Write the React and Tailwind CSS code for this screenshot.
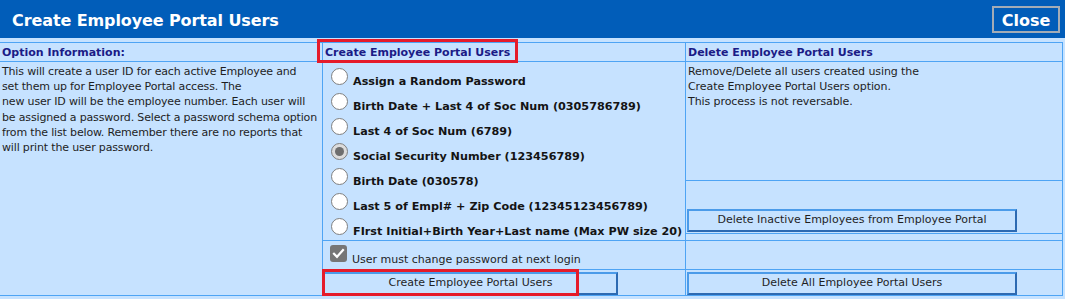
import React from "react";

function Radio({ checked }) {
  return (
    <span
      className={
        checked
          ? "mt-[2px] ml-[8px] w-[17px] h-[17px] rounded-full border border-[#7f7f7f] bg-[#dcdcdc] flex items-center justify-center shrink-0"
          : "mt-[2px] ml-[8px] w-[17px] h-[17px] rounded-full border border-[#7f7f7f] bg-white flex items-center justify-center shrink-0"
      }
    >
      {checked && <span className="w-[9px] h-[9px] rounded-full bg-[#6e6e6e]" />}
    </span>
  );
}

function Btn({ children, className }) {
  return (
    <div
      className={
        "h-[23px] flex items-center justify-center border-2 border-t-[#4b9be9] border-l-[#4b9be9] border-b-[#2d6ab2] border-r-[#2d6ab2] bg-[#c6e2ff] text-[#1f1f1f] " +
        className
      }
    >
      {children}
    </div>
  );
}

export default function App() {
  const options = [
    ["Assign a Random Password", false],
    ["Birth Date + Last 4 of Soc Num (0305786789)", false],
    ["Last 4 of Soc Num (6789)", false],
    ["Social Security Number (123456789)", true],
    ["Birth Date (030578)", false],
    ["Last 5 of Empl# + Zip Code (12345123456789)", false],
    ["FIrst Initial+Birth Year+Last name (Max PW size 20)", false],
  ];
  const info = [
    "This will create a user ID for each active Employee and",
    "set them up for Employee Portal access. The",
    "new user ID will be the employee number. Each user will",
    "be assigned a password. Select a password schema option",
    "from the list below. Remember there are no reports that",
    "will print the user password.",
  ];
  return (
    <div className="w-[1065px] h-[299px] bg-[#c6e2ff] font-['DejaVu_Sans',sans-serif] text-[11px] text-[#1e1e1e] overflow-hidden">
      <div className="h-[38px] bg-[#015db9] flex items-center justify-between pl-[12px] pr-[5px]">
        <div className="text-white font-bold text-[16px] leading-[20px] pt-[4px] tracking-[-0.1px]">
          Create Employee Portal Users
        </div>
        <div className="mt-[1px] h-[27px] w-[68px] border-2 border-[#a3acb6] flex items-center justify-center text-white font-bold text-[16px] leading-[20px] pt-[2px]">
          Close
        </div>
      </div>

      <div className="mt-[4px] w-[1063px] bg-[#4ea4f4] pt-px pr-px pb-px grid grid-cols-[322px_362px_376px] grid-rows-[18px_178px_28px_25px] gap-px">
        {/* header row */}
        <div className="bg-[#c6e2ff] pl-[2px] pt-[3px] font-bold text-[#1b1b86] leading-[14px]">
          Option Information:
        </div>
        <div className="relative bg-[#c6e2ff] pl-[2px] pt-[3px] font-bold text-[#1b1b86] leading-[14px]">
          Create Employee Portal Users
          <div className="absolute left-[-6px] top-[-4px] w-[201px] h-[24px] border-[3px] border-[#e51b2a]" />
        </div>
        <div className="bg-[#c6e2ff] pl-[2px] pt-[3px] font-bold text-[#1b1b86] leading-[14px]">
          Delete Employee Portal Users
        </div>

        {/* col1 body */}
        <div className="row-span-3 bg-[#c6e2ff] pl-[2px] pt-[2px] leading-[15.2px] tracking-[-0.16px]">
          {info.map((l) => (
            <div key={l} className="whitespace-nowrap">
              {l}
            </div>
          ))}
        </div>

        {/* col2 options */}
        <div className="bg-[#c6e2ff] pt-[4px]">
          {options.map(([label, checked]) => (
            <div key={label} className="h-[25px] flex items-start">
              <Radio checked={checked} />
              <span className="ml-[5px] mt-[9px] font-bold text-[11.2px] text-[#141414] leading-[13px] whitespace-nowrap">
                {label}
              </span>
            </div>
          ))}
        </div>

        {/* col3 row2 */}
        <div className="bg-[#c6e2ff] flex flex-col">
          <div className="h-[119px] border-b border-[#4ea4f4] pl-[2px] pt-[2px] leading-[15px] tracking-[-0.08px]">
            <div>Remove/Delete all users created using the</div>
            <div>Create Employee Portal Users option.</div>
            <div>This process is not reversable.</div>
          </div>
          <div className="h-[53px] border-b border-[#4ea4f4] flex items-end pb-[1px] pl-[1px]">
            <Btn className="w-[330px] h-[22px]">Delete Inactive Employees from Employee Portal</Btn>
          </div>
        </div>

        {/* col2 checkbox row */}
        <div className="bg-[#c6e2ff] flex items-start">
          <span className="ml-[7px] mt-[4px] w-[17px] h-[17px] rounded-[3px] bg-[#767676] flex items-center justify-center shrink-0">
            <svg width="13" height="13" viewBox="0 0 13 13">
              <path d="M2 6.8 L5 9.8 L11 3" stroke="white" strokeWidth="2.2" fill="none" strokeLinecap="square" />
            </svg>
          </span>
          <span className="ml-[5px] mt-[12px] leading-[13px] whitespace-nowrap">
            User must change password at next login
          </span>
        </div>
        <div className="bg-[#c6e2ff]" />

        {/* button row */}
        <div className="relative bg-[#c6e2ff] pt-[2px]">
          <Btn className="w-[295px]">Create Employee Portal Users</Btn>
          <div className="absolute left-[-1px] top-[-1px] w-[257px] h-[27px] border-[3px] border-[#e51b2a]" />
        </div>
        <div className="bg-[#c6e2ff] pt-[2px] pl-[1px]">
          <Btn className="w-[330px]">Delete All Employee Portal Users</Btn>
        </div>
      </div>
    </div>
  );
}
